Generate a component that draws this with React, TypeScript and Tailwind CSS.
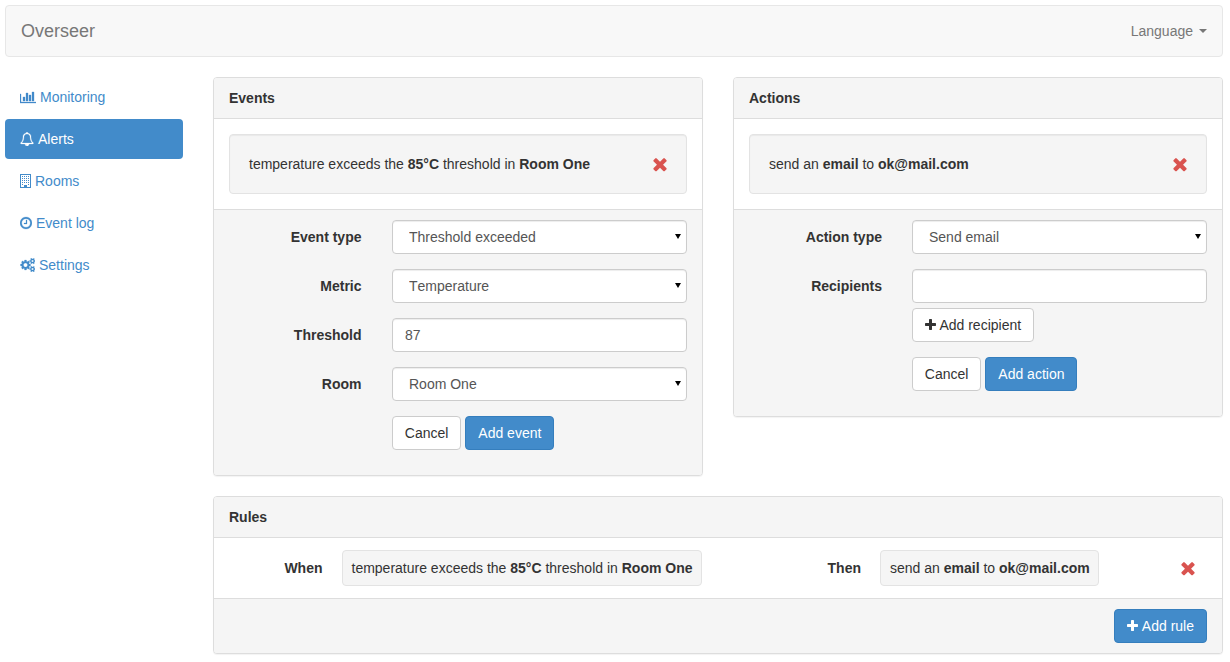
import type { ReactNode } from 'react';

const CLOSE =
  'M1490 1322q0 40-28 68l-136 136q-28 28-68 28t-68-28l-294-294-294 294q-28 28-68 28t-68-28l-136-136q-28-28-28-68t28-68l294-294-294-294q-28-28-28-68t28-68l136-136q28-28 68-28t68 28l294 294 294-294q28-28 68-28t68 28l136 136q28 28 28 68t-28 68l-294 294 294 294q28 28 28 68z';
const PLUS =
  'M1600 736v192q0 40-28 68t-68 28h-416v416q0 40-28 68t-68 28h-192q-40 0-68-28t-28-68v-416h-416q-40 0-68-28t-28-68v-192q0-40 28-68t68-28h416v-416q0-40 28-68t68-28h192q40 0 68 28t28 68v416h416q40 0 68 28t28 68z';

const CloseIcon = () => (
  <svg viewBox="0 0 1792 1792" className="w-5 h-5 fill-[#d9534f]">
    <path d={CLOSE} />
  </svg>
);

const PlusIcon = () => (
  <svg viewBox="192 0 1408 1792" className="w-[11px] h-[14px] fill-current">
    <path d={PLUS} />
  </svg>
);

const ChartIcon = () => (
  <svg viewBox="0 0 2048 1792" className="w-4 h-[14px] fill-current stroke-current stroke-[40]">
    <path d="M640 896v512h-256v-512h256zm384-512v1024h-256v-1024h256zm1024 1152v128h-2048v-1152h128v1024h1920zm-640-896v768h-256v-768h256zm384-384v1152h-256v-1152h256z" />
  </svg>
);

const BellIcon = () => (
  <svg viewBox="0 0 1792 1792" className="w-[14px] h-[14px] fill-current stroke-current stroke-[30]">
    <path d="M912 1696q0-16-16-16-59 0-101.5-42.5t-42.5-101.5q0-16-16-16t-16 16q0 73 51.5 124.5t124.5 51.5q16 0 16-16zm-666-288h1300q-266-300-266-832 0-51-24-105t-69-103-121.5-80.5-169.5-31.5-169.5 31.5-121.5 80.5-69 103-24 105q0 532-266 832zm1482 0q0 52-38 90t-90 38h-448q0 106-75 181t-181 75-181-75-75-181h-448q-52 0-90-38t-38-90q50-42 91-88t85-119.5 74.5-158.5 50-206 19.5-260q0-152 117-282.5t307-158.5q-8-19-8-39 0-40 28-68t68-28 68 28 28 68q0 20-8 39 190 28 307 158.5t117 282.5q0 139 19.5 260t50 206 74.5 158.5 85 119.5 91 88z" />
  </svg>
);

const BuildingIcon = () => (
  <svg viewBox="0 0 11 14" className="w-[11px] h-[14px] fill-current">
    <path d="M0 0h11v14H0zM1 1v12h3v-2h3v2h3V1z" fillRule="evenodd" />
    <path d="M2 2h1v1H2zM4 2h1v1H4zM6 2h1v1H6zM8 2h1v1H8zM2 4h1v1H2zM4 4h1v1H4zM6 4h1v1H6zM8 4h1v1H8zM2 6h1v1H2zM4 6h1v1H4zM6 6h1v1H6zM8 6h1v1H8zM2 8h1v1H2zM4 8h1v1H4zM6 8h1v1H6zM8 8h1v1H8zM2 10h1v1H2zM8 10h1v1H8z" />
  </svg>
);

const ClockIcon = () => (
  <svg viewBox="128 0 1536 1792" className="w-3 h-[14px] fill-current stroke-current stroke-[30]">
    <path d="M1024 544v448q0 14-9 23t-23 9h-320q-14 0-23-9t-9-23v-64q0-14 9-23t23-9h224v-352q0-14 9-23t23-9h64q14 0 23 9t9 23zm416 352q0-148-73-273t-198-198-273-73-273 73-198 198-73 273 73 273 198 198 273 73 273-73 198-198 73-273zm224 0q0 209-103 385.5t-279.5 279.5-385.5 103-385.5-103-279.5-279.5-103-385.5 103-385.5 279.5-279.5 385.5-103 385.5 103 279.5 279.5 103 385.5z" />
  </svg>
);

const CogsIcon = () => (
  <svg viewBox="0 0 1920 1792" className="w-[15px] h-[14px] fill-current stroke-current stroke-[30]">
    <path d="M960 896q0-106-75-181t-181-75-181 75-75 181 75 181 181 75 181-75 75-181zm768 512q0-52-38-90t-90-38-90 38-38 90q0 53 37.5 90.5t90.5 37.5 90.5-37.5 37.5-90.5zm0-1024q0-52-38-90t-90-38-90 38-38 90q0 53 37.5 90.5t90.5 37.5 90.5-37.5 37.5-90.5zm-384 421v185q0 10-7 19.5t-16 10.5l-155 24q-11 35-32 76 34 48 90 115 7 11 7 20 0 12-7 19-23 30-82.5 89.5t-78.5 59.5q-11 0-21-7l-115-90q-37 19-77 31-11 108-23 155-7 24-30 24h-186q-11 0-20-7.5t-10-17.5l-23-153q-34-10-75-31l-118 89q-7 7-20 7-11 0-21-8-144-133-144-160 0-9 7-19 10-14 41-53t47-61q-23-44-35-82l-152-24q-10-1-17-9.5t-7-19.5v-185q0-10 7-19.5t16-10.5l155-24q11-35 32-76-34-48-90-115-7-11-7-20 0-12 7-20 22-30 82-89t79-59q11 0 21 7l115 90q34-18 77-32 11-108 23-154 7-24 30-24h186q11 0 20 7.5t10 17.5l23 153q34 10 75 31l118-89q8-7 20-7 11 0 21 8 144 133 144 160 0 8-7 19-12 16-42 54t-45 60q23 48 34 82l152 23q10 2 17 10.5t7 19.5zm640 533v140q0 16-149 31-12 27-30 52 51 113 51 138 0 4-4 7-122 71-124 71-8 0-46-47t-52-68q-20 2-30 2t-30-2q-14 21-52 68t-46 47q-2 0-124-71-4-3-4-7 0-25 51-138-18-25-30-52-149-15-149-31v-140q0-16 149-31 13-29 30-52-51-113-51-138 0-4 4-7 4-2 35-20t59-34 30-16q8 0 46 46.5t52 67.5q20-2 30-2t30 2q51-71 92-112l6-2q4 0 124 70 4 3 4 7 0 25-51 138 17 23 30 52 149 15 149 31zm0-1024v140q0 16-149 31-12 27-30 52 51 113 51 138 0 4-4 7-122 71-124 71-8 0-46-47t-52-68q-20 2-30 2t-30-2q-14 21-52 68t-46 47q-2 0-124-71-4-3-4-7 0-25 51-138-18-25-30-52-149-15-149-31v-140q0-16 149-31 13-29 30-52-51-113-51-138 0-4 4-7 4-2 35-20t59-34 30-16q8 0 46 46.5t52 67.5q20-2 30-2t30 2q51-71 92-112l6-2q4 0 124 70 4 3 4 7 0 25-51 138 17 23 30 52 149 15 149 31z" />
  </svg>
);

const navItems = [
  { label: 'Monitoring', icon: <ChartIcon /> },
  { label: 'Alerts', icon: <BellIcon />, active: true },
  { label: 'Rooms', icon: <BuildingIcon /> },
  { label: 'Event log', icon: <ClockIcon /> },
  { label: 'Settings', icon: <CogsIcon /> },
];

const Panel = ({ title, children }: { title: string; children: ReactNode }) => (
  <div className="border border-[#ddd] rounded bg-white shadow-[0_1px_1px_rgba(0,0,0,0.05)]">
    <div className="h-10 px-[15px] flex items-center font-bold bg-[#f5f5f5] border-b border-[#ddd] rounded-t-[3px] box-content">
      {title}
    </div>
    {children}
  </div>
);

const Footer = ({ children }: { children: ReactNode }) => (
  <div className="bg-[#f5f5f5] border-t border-[#ddd] rounded-b-[3px] px-[15px] py-[10px]">{children}</div>
);

const Well = ({ children }: { children: ReactNode }) => (
  <div className="h-[60px] bg-[#f5f5f5] border border-[#e3e3e3] rounded shadow-[inset_0_1px_1px_rgba(0,0,0,0.05)] pl-[19px] pr-[16.5px] flex items-center justify-between">
    <span className="-mt-[1px]">{children}</span>
    <CloseIcon />
  </div>
);

const Field = ({ label, events, children }: { label: string; events?: boolean; children: ReactNode }) => (
  <div className="flex items-start mb-[15px]">
    <div
      className={
        events
          ? 'w-[132.5px] mr-[30.5px] pt-[7px] text-right font-bold shrink-0'
          : 'w-[133px] mr-[30px] pt-[7px] text-right font-bold shrink-0'
      }
    >
      {label}
    </div>
    <div className="flex-1 min-w-0">{children}</div>
  </div>
);

const inputClass =
  'block w-full h-[34px] px-3 bg-white border border-[#ccc] rounded text-[#555] text-sm shadow-[inset_0_1px_1px_rgba(0,0,0,0.075)]';

const Select = ({ value }: { value: string }) => (
  <div className="relative">
    <select
      className="block w-full h-[34px] pl-4 pr-6 appearance-none bg-white border border-[#ccc] rounded text-[#555] text-sm [font-kerning:none] shadow-[inset_0_1px_1px_rgba(0,0,0,0.075)]"
      defaultValue={value}
    >
      <option>{value}</option>
    </select>
    <span className="absolute right-[6.5px] top-[14px] w-0 h-0 border-x-[3.5px] border-x-transparent border-t-[5.5px] border-t-black pointer-events-none" />
  </div>
);

const Button = ({ primary, children }: { primary?: boolean; children: ReactNode }) => (
  <button
    className={
      primary
        ? 'inline-flex items-center gap-[3.9px] h-[34px] px-3 border border-[#357ebd] rounded bg-[#428bca] text-white'
        : 'inline-flex items-center gap-[3.9px] h-[34px] px-3 border border-[#ccc] rounded bg-white text-[#333]'
    }
  >
    {children}
  </button>
);

const EventRule = () => (
  <span>
    temperature exceeds the <b>85°C</b> threshold in <b>Room One</b>
  </span>
);

const ActionRule = () => (
  <span>
    send an <b>email</b> to <b>ok@mail.com</b>
  </span>
);

const RuleChip = ({ children }: { children: ReactNode }) => (
  <div className="h-9 pl-[9px] pr-[8.5px] flex items-center bg-[#f5f5f5] border border-[#e3e3e3] rounded whitespace-nowrap">
    {children}
  </div>
);

export default function App() {
  return (
    <div className="font-['Liberation_Sans',Arial,sans-serif] text-sm leading-5 text-[#333] bg-white pl-[5px] pr-[7px] pt-[5px] min-h-[662px]">
      {/* Navbar */}
      <nav className="h-[52px] flex items-center justify-between pl-[15px] pr-[15px] bg-[#f8f8f8] border border-[#e7e7e7] rounded mb-5">
        <span className="text-lg text-[#777]">Overseer</span>
        <span className="flex items-center gap-[6px] text-[#777]">
          Language
          <span className="w-0 h-0 border-x-4 border-x-transparent border-t-4 border-t-[#777]" />
        </span>
      </nav>

      <div className="flex gap-[30px]">
        {/* Sidebar */}
        <ul className="w-[178px] shrink-0 flex flex-col gap-[2px]">
          {navItems.map((item) => (
            <li
              key={item.label}
              className={
                item.active
                  ? 'h-10 px-[15px] flex items-center gap-1 rounded bg-[#428bca] text-white'
                  : 'h-10 px-[15px] flex items-center gap-1 rounded text-[#428bca]'
              }
            >
              {item.icon}
              {item.label}
            </li>
          ))}
        </ul>

        <div className="flex-1 min-w-0">
          <div className="grid grid-cols-2 gap-[30px] items-start mb-5">
            {/* Events */}
            <Panel title="Events">
              <div className="p-[15px]">
                <Well>
                  <EventRule />
                </Well>
              </div>
              <Footer>
                <Field events label="Event type">
                  <Select value="Threshold exceeded" />
                </Field>
                <Field events label="Metric">
                  <Select value="Temperature" />
                </Field>
                <Field events label="Threshold">
                  <input className={inputClass} defaultValue="87" />
                </Field>
                <Field events label="Room">
                  <Select value="Room One" />
                </Field>
                <div className="flex gap-[3.9px] pl-[162.83px] mb-[15px]">
                  <Button>Cancel</Button>
                  <Button primary>Add event</Button>
                </div>
              </Footer>
            </Panel>

            {/* Actions */}
            <Panel title="Actions">
              <div className="p-[15px]">
                <Well>
                  <ActionRule />
                </Well>
              </div>
              <Footer>
                <Field label="Action type">
                  <Select value="Send email" />
                </Field>
                <Field label="Recipients">
                  <input className={inputClass} />
                  <div className="mt-[5px] -ml-[0.5px]">
                    <Button>
                      <PlusIcon />
                      Add recipient
                    </Button>
                  </div>
                </Field>
                <div className="flex gap-[3.9px] pl-[162.83px] mb-[15px]">
                  <Button>Cancel</Button>
                  <Button primary>Add action</Button>
                </div>
              </Footer>
            </Panel>
          </div>

          {/* Rules */}
          <Panel title="Rules">
            <div className="h-[60px] flex items-center">
              <b className="w-[108.5px] text-right mr-[19px]">When</b>
              <RuleChip>
                <EventRule />
              </RuleChip>
              <b className="w-[159px] text-right mr-[19px]">Then</b>
              <RuleChip>
                <ActionRule />
              </RuleChip>
              <span className="ml-[78.5px]">
                <CloseIcon />
              </span>
            </div>
            <Footer>
              <div className="flex justify-end">
                <Button primary>
                  <PlusIcon />
                  Add rule
                </Button>
              </div>
            </Footer>
          </Panel>
        </div>
      </div>
    </div>
  );
}
